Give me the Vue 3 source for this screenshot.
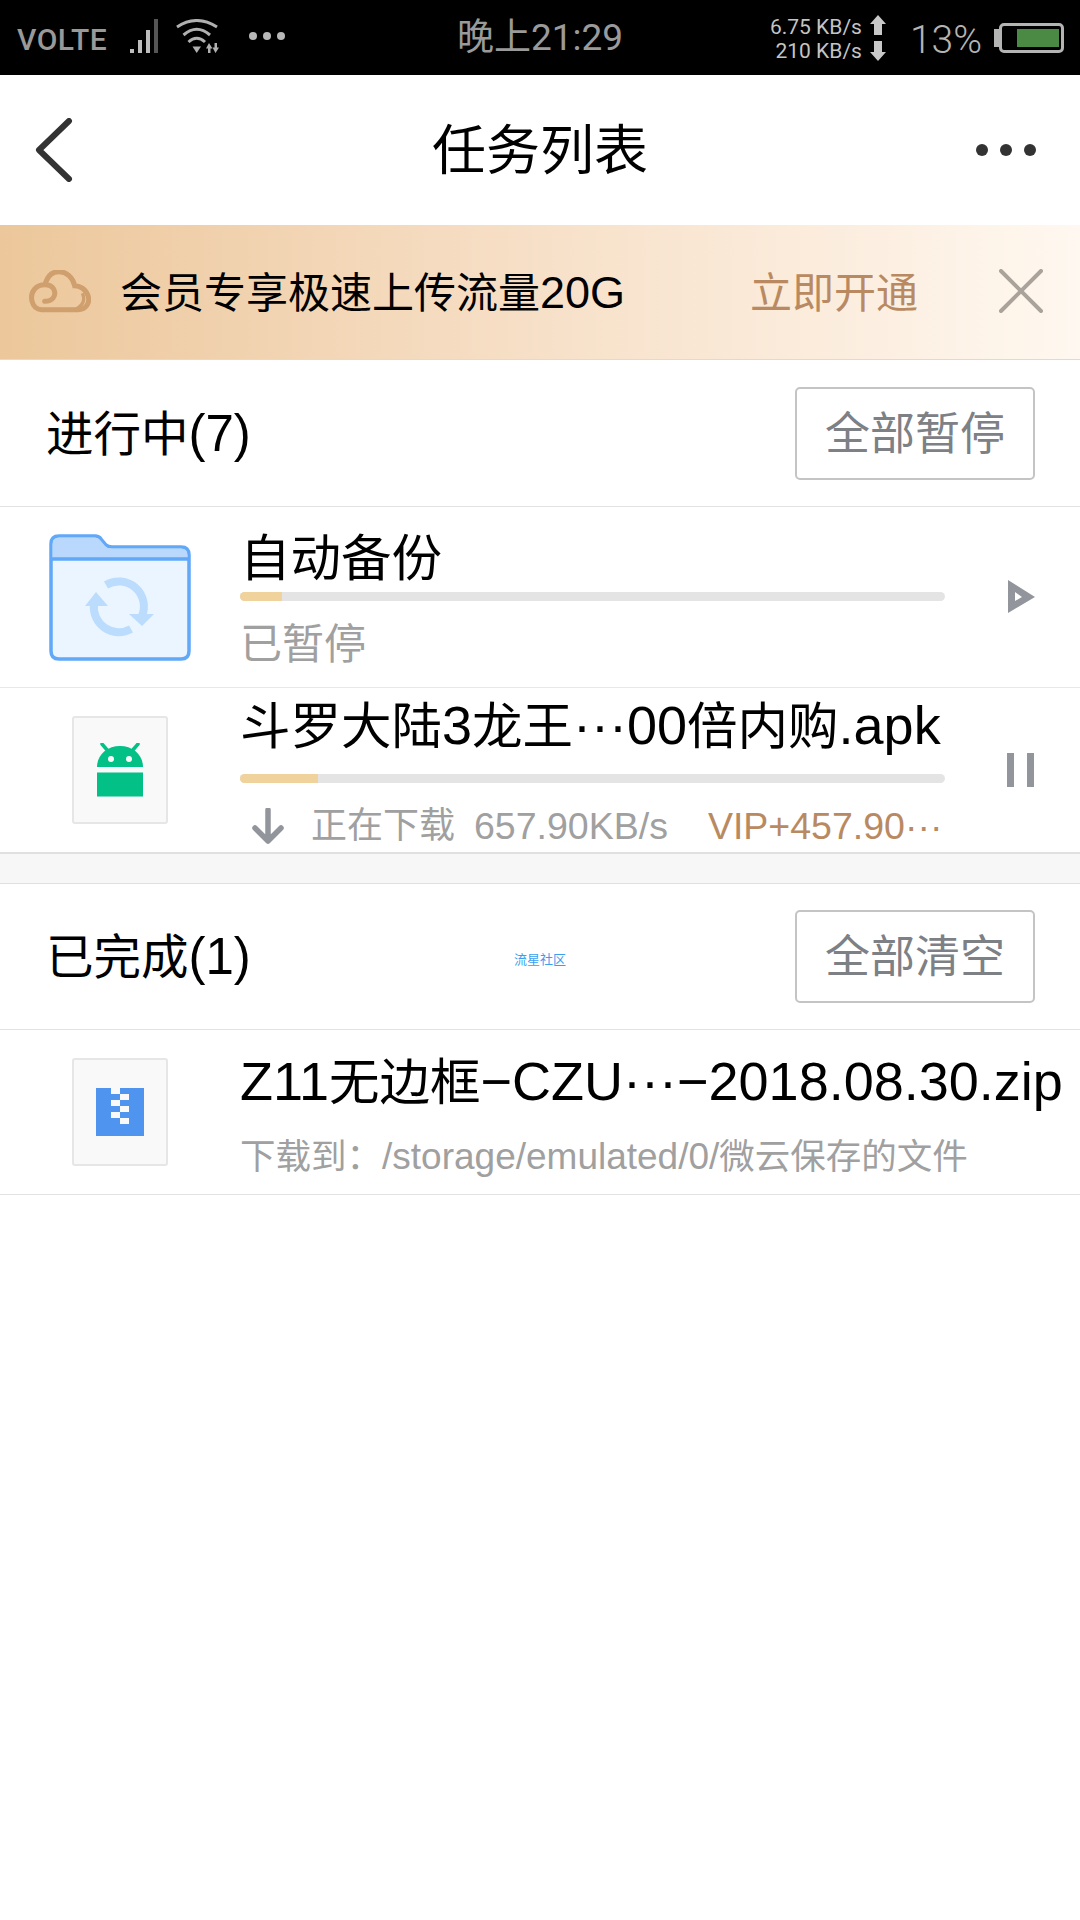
<!--
  任务列表页面
  传输任务：进行中 / 已完成
-->
<template>
  <div class="page">
    <!-- 状态栏 -->
    <div class="status-bar">
      <div class="status-left">
        <span class="volte">VOLTE</span>
        <svg class="signal" width="28" height="34" viewBox="0 0 28 34">
          <rect x="0" y="30" width="4" height="4" fill="#bdbdbd" />
          <rect x="8" y="21" width="4" height="13" fill="#bdbdbd" />
          <rect x="16" y="11" width="4" height="23" fill="#bdbdbd" />
          <rect x="24" y="0" width="4" height="34" fill="#555" />
        </svg>
        <svg class="wifi" width="46" height="38" viewBox="0 0 46 38">
          <path d="M1 8 Q20.500 -5 41 8" fill="none" stroke="#b0b0b0" stroke-width="3" />
          <path d="M7.500 16 Q20.700 4.500 34 16" fill="none" stroke="#b0b0b0" stroke-width="3" />
          <path d="M12.500 23 Q20.700 15.500 29 23" fill="none" stroke="#b0b0b0" stroke-width="3" />
          <path d="M16.500 27.500 H25 L20.700 34 Z" fill="#b0b0b0" />
          <path d="M33 24 L36.500 29.500 H34.500 V34 H32 V29.500 H30 Z" fill="#b0b0b0" />
          <path d="M39.500 34 L43 28.500 H41 V24 H38.500 V28.500 H36.500 Z" fill="#b0b0b0" />
        </svg>
        <span class="status-dots"><i></i><i></i><i></i></span>
      </div>
      <div class="status-time">晚上21:29</div>
      <div class="status-right">
        <div class="speed">
          <span>6.75 KB/s</span>
          <span>210 KB/s</span>
        </div>
        <svg width="16" height="46" viewBox="0 0 16 46">
          <path d="M8 0 L16 9 H12 V20 H4 V9 H0 Z" fill="#c8c8c8" />
          <path d="M8 46 L16 37 H12 V26 H4 V37 H0 Z" fill="#c8c8c8" />
        </svg>
        <span class="percent">13%</span>
        <div class="battery">
          <div class="battery-cap"></div>
          <div class="battery-body"><div class="battery-fill"></div></div>
        </div>
      </div>
    </div>

    <!-- 标题栏 -->
    <div class="nav-bar">
      <svg class="back" width="38" height="64" viewBox="0 0 38 64">
        <path d="M34 3 L4 32 L34 61" fill="none" stroke="#333" stroke-width="6" stroke-linecap="round" stroke-linejoin="round" />
      </svg>
      <div class="nav-title">任务列表</div>
      <div class="nav-more"><i></i><i></i><i></i></div>
    </div>

    <!-- 会员横幅 -->
    <div class="banner">
      <svg class="cloud" width="62" height="44" viewBox="28 28 186 132">
        <path d="M75 122 C98 122 112 105 102 85 C92 68 60 68 45 85 C28 105 35 145 65 147 H175 C200 147 212 125 205 105 C198 85 180 75 165 75 C160 50 140 33 118 33 C100 33 85 45 78 65" fill="none" stroke="#cf9f6e" stroke-width="15" stroke-linecap="round" />
        <path d="M165 147 C190 135 198 118 188 98" fill="none" stroke="#cf9f6e" stroke-width="10" />
      </svg>
      <div class="banner-text">会员专享极速上传流量<span class="lat">20G</span></div>
      <div class="banner-link">立即开通</div>
      <svg class="close" width="44" height="44" viewBox="0 0 44 44">
        <path d="M2 2 L42 42 M42 2 L2 42" stroke="#a9a39b" stroke-width="4" stroke-linecap="round" />
      </svg>
    </div>

    <!-- 进行中 -->
    <div class="section-head">
      <span class="section-title">进行中<span class="lat">(7)</span></span>
      <button class="head-btn">全部暂停</button>
    </div>

    <div class="row row-backup">
      <div class="row-icon">
        <svg width="142" height="127" viewBox="0 0 142 127">
          <path d="M2 10 Q2 2 10 2 H46 Q50 2 52 5 L57 11 Q59 13 63 13 H132 Q140 13 140 21 V117 Q140 125 132 125 H10 Q2 125 2 117 Z" fill="#eaf5ff" stroke="#61a8f9" stroke-width="3.500" />
          <path d="M3.500 24 V10 Q3.500 3.500 10 3.500 H46 Q49 3.500 51 6 L56 12 Q58 14.500 63 14.500 H132 Q138.500 14.500 138.500 21 V24 Z" fill="#b9d8fc" />
          <path d="M2 25 H140" stroke="#61a8f9" stroke-width="3.500" />
          <path d="M45 70 A25 25 0 0 0 82 95" fill="none" stroke="#bcdcfd" stroke-width="8" />
          <path d="M93 82 A25 25 0 0 0 57 51" fill="none" stroke="#bcdcfd" stroke-width="8" />
          <path d="M47 58 L59 72 H36 Z" fill="#bcdcfd" />
          <path d="M93 92 L105 80 H80 Z" fill="#bcdcfd" />
        </svg>
      </div>
      <div class="row-body">
        <div class="row-title">自动备份</div>
        <div class="progress"><div class="progress-fill" :style="{ width: backupPercent + '%' }"></div></div>
        <div class="row-sub paused">已暂停</div>
      </div>
      <div class="row-action">
        <svg class="play" width="28" height="34" viewBox="0 0 28 34">
          <path fill-rule="evenodd" d="M0 0 L27 17 L0 33 Z M7 12 V21 L14 17 Z" fill="#92959c" />
        </svg>
      </div>
    </div>

    <div class="row row-apk">
      <div class="row-icon">
        <div class="file-box">
          <svg width="46" height="54" viewBox="0 0 46 54">
            <path d="M5 1 L11 8 M41 1 L35 8" stroke="#02c086" stroke-width="3.500" stroke-linecap="round" />
            <path d="M0 24 C0 12 10 3 23 3 C36 3 46 12 46 24 Z" fill="#02c086" />
            <circle cx="14" cy="16" r="3" fill="#f9f9f9" />
            <circle cx="32" cy="16" r="3" fill="#f9f9f9" />
            <rect x="0" y="29.500" width="46" height="24" fill="#02c086" />
          </svg>
        </div>
      </div>
      <div class="row-body">
        <div class="row-title">斗罗大陆<span class="lat">3</span>龙王<span class="lat">···00</span>倍内购<span class="lat">.apk</span></div>
        <div class="progress"><div class="progress-fill" :style="{ width: apkPercent + '%' }"></div></div>
        <div class="row-sub download">
          <svg class="down" width="32" height="36" viewBox="0 0 32 36">
            <path d="M16 2 V32 M3 20 L16 33 L29 20" fill="none" stroke="#92959c" stroke-width="5.500" stroke-linecap="round" stroke-linejoin="round" />
          </svg>
          <span class="dl-state">正在下载</span>
          <span class="dl-speed">657.90KB/s</span>
          <span class="dl-vip">VIP+457.90···</span>
        </div>
      </div>
      <div class="row-action">
        <div class="pause"><i></i><i></i></div>
      </div>
    </div>

    <div class="gap"></div>

    <!-- 已完成 -->
    <div class="section-head done">
      <span class="section-title">已完成<span class="lat">(1)</span></span>
      <span class="watermark">流星社区</span>
      <button class="head-btn">全部清空</button>
    </div>

    <div class="row row-zip">
      <div class="row-icon">
        <div class="file-box">
          <svg width="48" height="48" viewBox="0 0 48 48">
            <rect width="48" height="48" fill="#4f94ef" />
            <rect v-for="(b, i) in zipTeeth" :key="i" :x="b.x" :y="i * 6" width="9" height="6" fill="#f9f9f9" />
          </svg>
        </div>
      </div>
      <div class="row-body wide">
        <div class="row-title"><span class="lat">Z11</span>无边框<span class="lat">−CZU···−2018.08.30.zip</span></div>
        <div class="row-sub saved">下载到：<span class="lat">/storage/emulated/0/</span>微云保存的文件</div>
      </div>
    </div>
  </div>
</template>

<script setup>
const backupPercent = 6
const apkPercent = 11

// 压缩包图标的拉链齿
const zipTeeth = [{ x: 15 }, { x: 24 }, { x: 15 }, { x: 24 }, { x: 15 }, { x: 24 }]
</script>

<style scoped>
.page { width: 1080px; height: 1920px; background: #fff; font-family: "Liberation Sans", "Noto Sans CJK SC", sans-serif; color: #000; overflow: hidden; }

/* 西文比中文略大 */
.lat { line-height: 1; }

/* 状态栏 */
.status-bar { height: 75px; background: #000; display: flex; align-items: center; position: relative; font-family: Roboto, "Noto Sans CJK SC", sans-serif; color: #a8a8a8; }
.status-left { display: flex; align-items: center; padding-left: 17px; }
.volte { font-size: 30px; font-weight: 500; letter-spacing: 0.5px; color: #999; width: 113px; margin-top: 3px; }
.signal { margin-top: -3px; }
.wifi { margin-left: 18px; }
.status-dots { display: flex; gap: 6px; margin-left: 27px; margin-top: -3px; }
.status-dots i { width: 8px; height: 8px; border-radius: 50%; background: #b8b8b8; }
.status-time { position: absolute; left: 0; right: 0; text-align: center; font-size: 37px; line-height: 74px; color: #9a9a9a; }
.status-right { margin-left: auto; display: flex; align-items: center; padding-right: 16px; }
.speed { display: flex; flex-direction: column; align-items: flex-end; font-size: 21px; line-height: 24px; color: #c4c4c4; margin-right: 8px; margin-top: 2px; }
.percent { font-size: 39px; font-weight: 300; color: #b4b4b4; margin-left: 24px; margin-right: 12px; margin-top: 4px; }
.battery { display: flex; align-items: center; }
.battery-cap { width: 5px; height: 18px; background: #b4b4b4; }
.battery-body { width: 65px; height: 30px; border: 3px solid #b4b4b4; border-radius: 5px; box-sizing: border-box; padding: 3px 2px 3px 15px; }
.battery-fill { height: 100%; background: #4a8a45; }

/* 标题栏 */
.nav-bar { height: 150px; display: flex; align-items: center; position: relative; padding: 0 44px 0 35px; justify-content: space-between; }
.nav-title { position: absolute; left: 0; right: 0; text-align: center; font-size: 54px; padding-bottom: 8px; }
.nav-more { display: flex; gap: 12px; }
.nav-more i { width: 12px; height: 12px; border-radius: 50%; background: #333; }

/* 横幅 */
.banner { height: 134px; border-bottom: 1px solid #c5e2f2; display: flex; align-items: center; background: linear-gradient(90deg, #ecc79b 0%, #f7e0c8 50%, #fff8f0 100%); }
.cloud { margin-left: 29px; }
.banner-text { font-size: 42px; margin-left: 29px; padding-bottom: 5px; white-space: nowrap; }
.banner-text .lat { font-size: 45px; }
.banner-link { font-size: 42px; color: #b98a62; margin-left: 125px; padding-bottom: 5px; }
.close { margin-left: 81px; margin-top: -2px; }

/* 分组头 */
.section-head { height: 146px; border-bottom: 1px solid #e2e2e2; display: flex; align-items: center; justify-content: space-between; padding: 0 45px 0 46px; position: relative; }
.section-head.done { height: 145px; }
.section-title { font-size: 47.500px; padding-bottom: 6px; }
.section-title .lat { font-size: 51px; }
.head-btn { width: 240px; height: 93px; padding: 0 0 6px; background: #fff; border: 2px solid #c4c4c4; border-radius: 5px; font-family: inherit; font-size: 45px; color: #7d8085; }
.watermark { position: absolute; left: 514px; top: 68px; font-size: 13px; line-height: 16px; color: #3aa0ee; }

/* 任务行 */
.row { display: flex; border-bottom: 1px solid #e8e8e8; }
.row-backup { height: 180px; }
.row-apk { height: 164px; border-bottom: 2px solid #e0e0e0; }
.row-zip { height: 164px; border-bottom: 1px solid #e2e2e2; }
.row-icon { width: 240px; display: flex; align-items: center; justify-content: center; flex-shrink: 0; }
.row-body { width: 705px; }
.row-body.wide { width: 840px; }
.row-backup .row-body { padding-top: 22px; }
.row-apk .row-body { padding-top: 9px; }
.row-zip .row-body { padding-top: 23px; }
.row-title { font-size: 50.500px; line-height: 60px; white-space: nowrap; }
.row-title .lat { font-size: 54px; }
.progress { height: 9px; border-radius: 5px; background: #e4e4e4; overflow: hidden; margin-top: 3px; }
.row-apk .progress { margin-top: 17px; }
.progress-fill { height: 100%; background: #f0d29c; }
.row-sub { line-height: 50px; color: #a0a0a0; white-space: nowrap; }
.paused { font-size: 42px; margin-top: 19px; }
.download { font-size: 36px; margin-top: 18px; display: flex; align-items: center; padding-left: 12px; }
.down { margin-right: 27px; }
.dl-speed { font-size: 37.500px; margin-left: 19px; }
.dl-vip { font-size: 37.500px; color: #b98a62; margin-left: 40px; }
.saved { font-size: 35.500px; margin-top: 19px; }
.saved .lat { font-size: 37px; }
.row-action { flex: 1; display: flex; align-items: center; justify-content: center; padding-left: 16px; }
.play { margin-left: 2px; }
.pause { display: flex; gap: 13px; }
.pause i { width: 7px; height: 34px; background: #92959c; }
.file-box { width: 96px; height: 108px; box-sizing: border-box; background: #f9f9f9; border: 2px solid #e6e6e6; border-radius: 3px; display: flex; align-items: center; justify-content: center; }

.gap { height: 29px; background: #f7f7f7; border-bottom: 1px solid #e0e0e0; }
</style>
